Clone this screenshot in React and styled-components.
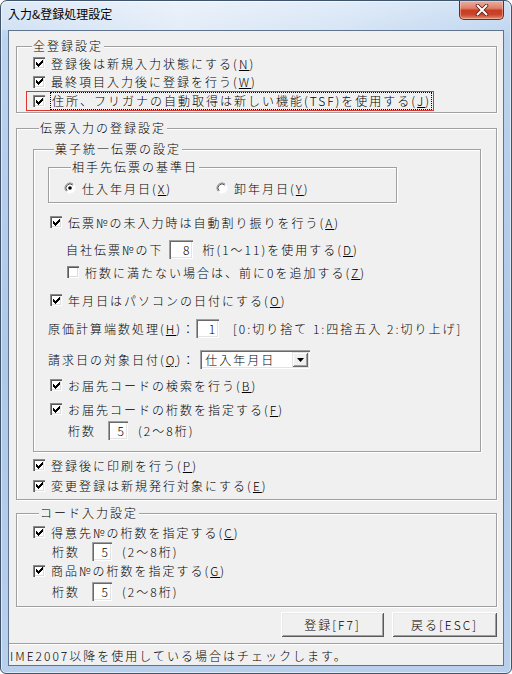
import React from 'react';
import styled, { createGlobalStyle } from 'styled-components';

const FONT = `"Noto Sans CJK JP", "Noto Sans", sans-serif`;

const Global = createGlobalStyle`
  html, body { margin: 0; padding: 0; background: #ffffff; }
  body { font-family: ${FONT}; }
  * { box-sizing: border-box; }
`;

const Window = styled.div`
  width: 512px;
  height: 674px;
  border: 1px solid #3f536b;
  border-radius: 7px 7px 6px 6px;
  background: linear-gradient(180deg, #d3e3f5 0%, #bcd3ee 6%, #aec8e8 55%, #b8d0ec 100%);
  box-shadow: inset 0 0 0 1px rgba(255, 255, 255, 0.55);
  display: flex;
  flex-direction: column;
  overflow: hidden;
`;

const TitleBar = styled.div`
  flex: none;
  height: 29px;
  display: flex;
  justify-content: space-between;
  align-items: flex-start;
  padding: 0 7px;
  background: linear-gradient(90deg, rgba(255,255,255,0.25) 0%, rgba(255,255,255,0.55) 35%, rgba(255,255,255,0.35) 65%, rgba(190,215,245,0.15) 100%);
`;

const Title = styled.div`
  margin-top: 5px;
  font-size: 12px;
  line-height: 16px;
  color: #000;
`;

const CloseButton = styled.div`
  width: 45px;
  height: 19px;
  border: 1px solid #6e2a1f;
  border-top: none;
  border-radius: 0 0 5px 5px;
  background: linear-gradient(180deg, #eab0a2 0%, #de7f69 40%, #c93d22 52%, #c8452c 75%, #e38d6f 100%);
  box-shadow: inset 0 0 0 1px rgba(255, 220, 210, 0.45);
  display: flex;
  align-items: center;
  justify-content: center;
`;

const Client = styled.div`
  flex: 1;
  margin: 0 7px 7px;
  border: 1px solid #5f738c;
  background: #f0f0f0;
  display: flex;
  flex-direction: column;
  font-size: 12px;
  font-weight: 300;
  letter-spacing: 2px;
  color: #000;
`;

const Body = styled.div`
  flex: 1;
  display: flex;
  flex-direction: column;
  padding: 9px 6px 0 7px;
`;

const Group = styled.fieldset`
  margin: ${p => p.$mt || 0}px 0 0;
  padding: ${p => p.$pad};
  border: 1px solid #a0a0a0;
  box-shadow: inset 1px 1px 0 #ffffff, 1px 1px 0 #ffffff;
  min-width: 0;
  display: flex;
  flex-direction: column;
  align-items: stretch;
  ${p => (p.$w ? `width: ${p.$w}px; align-self: flex-start;` : '')}
`;

const Legend = styled.legend`
  padding: 0 1px;
  margin-left: ${p => p.$ml || 6}px;
  height: 12px;
  line-height: 12px;
  font-size: 12px;
  background: #f0f0f0;
  white-space: nowrap;
`;

const Row = styled.div`
  display: flex;
  align-items: center;
  height: ${p => p.$h || 20}px;
  margin-top: ${p => p.$mt || 0}px;
  padding-left: ${p => p.$pl || 0}px;
  white-space: nowrap;
`;

const HighlightRow = styled(Row)`
  align-self: flex-start;
  border: 1px solid #e0342c;
  padding-right: 1px;
`;

const Label = styled.span`
  margin-left: 6px;
`;

const FocusLabel = styled.span`
  margin-left: 5px;
  padding: 0 0 0 1px;
  height: 18px;
  line-height: 16px;
  border: 1px dotted #000;
`;

const BoxWrap = styled.span`
  flex: none;
  width: 12px;
  height: 12px;
  background: #fff;
  box-shadow: inset 1px 1px 0 #8a8a8a, inset 2px 2px 0 #5a5a5a, inset -1px -1px 0 #ffffff, inset -2px -2px 0 #dcdcdc;
  display: inline-flex;
  align-items: center;
  justify-content: center;
`;

const CHECK_TOPS = [2, 3, 4, 3, 2, 1, 0];
const checkPath = CHECK_TOPS.map((t, i) => `M${i} ${t}h1v3h-1z`).join('');

function CheckBox({ checked }) {
  return (
    <BoxWrap>
      {checked && (
        <svg width="7" height="7" viewBox="0 0 7 7" shapeRendering="crispEdges">
          <path d={checkPath} fill="#000" />
        </svg>
      )}
    </BoxWrap>
  );
}

function CheckRow({ checked = true, children, ...rest }) {
  return (
    <Row {...rest}>
      <CheckBox checked={checked} />
      <Label>{children}</Label>
    </Row>
  );
}

const RadioItem = styled.span`
  display: inline-flex;
  align-items: center;
  width: ${p => (p.$w ? `${p.$w}px` : 'auto')};
`;

function Radio({ checked }) {
  return (
    <svg width="12" height="12" viewBox="0 0 12 12">
      <circle cx="6" cy="6" r="5" fill="#fff" />
      <path d="M2.46 9.54 A5 5 0 0 1 9.54 2.46" stroke="#8a8a8a" fill="none" />
      <path d="M9.54 2.46 A5 5 0 0 1 2.46 9.54" stroke="#ffffff" fill="none" />
      <path d="M3.17 8.83 A4 4 0 0 1 8.83 3.17" stroke="#555" fill="none" />
      {checked && <circle cx="6" cy="6" r="1.8" fill="#000" />}
    </svg>
  );
}

const Field = styled.span`
  flex: none;
  display: inline-flex;
  align-items: center;
  justify-content: flex-end;
  width: ${p => p.$w}px;
  height: 19px;
  padding-right: 2px;
  margin: 0 ${p => p.$mr || 0}px 0 ${p => p.$ml || 0}px;
  background: #fff;
  box-shadow: inset 1px 1px 0 #a0a0a0, inset 2px 2px 0 #696969, inset -1px -1px 0 #ffffff, inset -2px -2px 0 #e3e3e3;
`;

const Select = styled.span`
  flex: none;
  display: inline-flex;
  align-items: center;
  justify-content: space-between;
  width: 110px;
  height: 19px;
  margin-left: 4px;
  padding: 2px 2px 2px 5px;
  background: #fff;
  box-shadow: inset 1px 1px 0 #a0a0a0, inset 2px 2px 0 #696969, inset -1px -1px 0 #ffffff, inset -2px -2px 0 #e3e3e3;
`;

const SelectArrow = styled.span`
  width: 16px;
  height: 15px;
  background: #f0f0f0;
  box-shadow: inset 1px 1px 0 #e3e3e3, inset -1px -1px 0 #696969, inset 2px 2px 0 #ffffff, inset -2px -2px 0 #a0a0a0;
  display: flex;
  align-items: center;
  justify-content: center;
`;

const ButtonBar = styled.div`
  display: flex;
  justify-content: flex-end;
  gap: 8px;
  margin-top: 5px;
`;

const Button = styled.div`
  width: ${p => p.$w}px;
  height: 25px;
  display: flex;
  align-items: center;
  justify-content: center;
  background: #f0f0f0;
  box-shadow: inset 1px 1px 0 #ffffff, inset -1px -1px 0 #5a5a5a, inset 2px 2px 0 #e8e8e8, inset -2px -2px 0 #a0a0a0;
`;

const StatusBar = styled.div`
  flex: none;
  height: 22px;
  border-top: 1px solid #a0a0a0;
  box-shadow: inset 0 1px 0 #ffffff;
  padding: 2px 0 0 1px;
  line-height: 19px;
  white-space: nowrap;
`;

function Digits({ children }) {
  return <span>{children}</span>;
}

function DigitsRow({ pl, mt, value }) {
  return (
    <Row $mt={mt} $h={19} $pl={pl}>
      桁数
      <Field $w={20} $ml={12} $mr={10}><Digits>{value}</Digits></Field>
      (2～8桁)
    </Row>
  );
}

export default function App() {
  return (
    <>
      <Global />
      <Window>
        <TitleBar>
          <Title>入力&amp;登録処理設定</Title>
          <CloseButton>
            <svg width="14" height="12" viewBox="0 0 14 12">
              <path d="M2.5 1.5 L11.5 10.5 M11.5 1.5 L2.5 10.5" stroke="#5a1a12" strokeWidth="3.6" strokeLinecap="round" />
              <path d="M2.5 1.5 L11.5 10.5 M11.5 1.5 L2.5 10.5" stroke="#ffffff" strokeWidth="2" strokeLinecap="round" />
            </svg>
          </CloseButton>
        </TitleBar>
        <Client>
          <Body>
            <Group $pad="2px 0 1px 9px">
              <Legend>全登録設定</Legend>
              <CheckRow $h={18} $pl={7}>登録後は新規入力状態にする(<u>N</u>)</CheckRow>
              <CheckRow $h={19} $pl={7}>最終項目入力後に登録を行う(<u>W</u>)</CheckRow>
              <HighlightRow $h={20} $pl={6}>
                <CheckBox checked />
                <FocusLabel>住所、フリガナの自動取得は新しい機能(TSF)を使用する(<u>J</u>)</FocusLabel>
              </HighlightRow>
            </Group>

            <Group $mt={9} $pad="9px 15px 3px 16px">
              <Legend>伝票入力の登録設定</Legend>
              <Group $pad="6px 0 11px 14px">
                <Legend>菓子統一伝票の設定</Legend>
                <Group $w={349} $pad="5px 0 4px 15px">
                  <Legend $ml={7}>相手先伝票の基準日</Legend>
                  <Row $h={20}>
                    <RadioItem $w={152}>
                      <Radio checked />
                      <Label>仕入年月日(<u>X</u>)</Label>
                    </RadioItem>
                    <RadioItem>
                      <Radio />
                      <Label>卸年月日(<u>Y</u>)</Label>
                    </RadioItem>
                  </Row>
                </Group>
                <CheckRow $mt={9} $pl={2}>伝票№の未入力時は自動割り振りを行う(<u>A</u>)</CheckRow>
                <Row $mt={8} $h={19} $pl={18}>
                  自社伝票№の下
                  <Field $w={24} $ml={6} $mr={9}><Digits>8</Digits></Field>
                  桁(1～11)を使用する(<u>D</u>)
                </Row>
                <CheckRow $mt={3} $pl={19} checked={false}>桁数に満たない場合は、前に0を追加する(<u>Z</u>)</CheckRow>
                <CheckRow $mt={8} $pl={2}>年月日はパソコンの日付にする(<u>O</u>)</CheckRow>
                <Row $mt={9} $h={19}>
                  原価計算端数処理(<u>H</u>)：
                  <Field $w={23} $mr={14}><Digits>1</Digits></Field>
                  [0:切り捨て 1:四捨五入 2:切り上げ]
                </Row>
                <Row $mt={12} $h={19}>
                  請求日の対象日付(<u>Q</u>)：
                  <Select>
                    <span>仕入年月日</span>
                    <SelectArrow>
                      <svg width="7" height="4" viewBox="0 0 7 4">
                        <path d="M0 0 H7 L3.5 4 Z" fill="#000" />
                      </svg>
                    </SelectArrow>
                  </Select>
                </Row>
                <CheckRow $mt={6} $pl={2}>お届先コードの検索を行う(<u>B</u>)</CheckRow>
                <CheckRow $mt={4} $pl={2}>お届先コードの桁数を指定する(<u>F</u>)</CheckRow>
                <DigitsRow mt={2} pl={20} value="5" />
              </Group>
              <CheckRow $mt={3}>登録後に印刷を行う(<u>P</u>)</CheckRow>
              <CheckRow $h={21}>変更登録は新規発行対象にする(<u>E</u>)</CheckRow>
            </Group>

            <Group $mt={7} $pad="3px 0 5px 16px">
              <Legend>コード入力設定</Legend>
              <CheckRow>得意先№の桁数を指定する(<u>C</u>)</CheckRow>
              <DigitsRow pl={19} value="5" />
              <CheckRow $h={19}>商品№の桁数を指定する(<u>G</u>)</CheckRow>
              <DigitsRow mt={2} pl={19} value="5" />
            </Group>

            <ButtonBar>
              <Button $w={103}>登録[F7]</Button>
              <Button $w={105}>戻る[ESC]</Button>
            </ButtonBar>
          </Body>
          <StatusBar>IME2007以降を使用している場合はチェックします。</StatusBar>
        </Client>
      </Window>
    </>
  );
}
